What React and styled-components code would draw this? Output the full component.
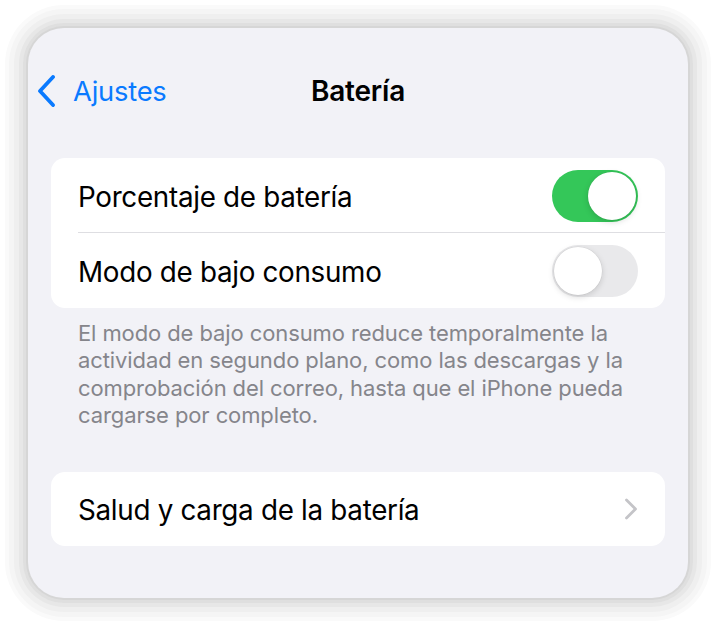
import React from "react";
import styled, { createGlobalStyle } from "styled-components";

const Global = createGlobalStyle`
  html, body { margin: 0; padding: 0; background: #ffffff; }
  body { font-family: Inter, "Noto Sans", sans-serif; -webkit-font-smoothing: antialiased; }
`;

const Page = styled.div`
  width: 716px;
  height: 626px;
  padding: 28px;
  box-sizing: border-box;
  display: flex;
`;

const Screen = styled.div`
  flex: 1;
  background: #f2f2f7;
  border-radius: 36px;
  box-shadow: 0 0 0 2px #d6d6d6, 0 0 0 5px #dfdfdf, 0 0 0 9px #e7e7e7, 0 0 0 14px #efefef, 0 0 0 19px #f5f5f5, 0 0 0 23px #fafafa;
  padding: 28px 23px 0;
  display: flex;
  flex-direction: column;
  overflow: hidden;
`;

const NavBar = styled.div`
  height: 70px;
  position: relative;
  display: flex;
  align-items: center;
  justify-content: center;
`;

const BackButton = styled.div`
  position: absolute;
  left: -15px;
  top: 0;
  bottom: 0;
  display: flex;
  align-items: center;
  gap: 15px;
  color: #0a7aff;
  font-size: 27.3px;
  letter-spacing: -0.2px;
`;

const Title = styled.div`
  font-size: 28px;
  font-weight: 600;
  color: #000;
  letter-spacing: -0.2px;
`;

const Group = styled.div`
  background: #ffffff;
  border-radius: 14px;
  margin-top: ${(p) => p.$mt}px;
  display: flex;
  flex-direction: column;
`;

const Row = styled.div`
  height: ${(p) => p.$h}px;
  display: flex;
  align-items: center;
  justify-content: space-between;
  padding: 0 27px;
  position: relative;
  ${(p) =>
    p.$divider &&
    `&::after {
      content: "";
      position: absolute;
      left: 27px;
      right: 0;
      bottom: 0;
      height: 1px;
      background: #dedee2;
    }`}
`;

const Label = styled.span`
  font-size: 27.8px;
  color: #000;
  letter-spacing: -0.3px;
  padding-top: 2px;
`;

const Toggle = styled.div`
  width: 86px;
  height: 52px;
  border-radius: 26px;
  background: ${(p) => (p.$on ? "#34c759" : "#e9e9eb")};
  position: relative;
  flex-shrink: 0;
`;

const Knob = styled.div`
  position: absolute;
  top: 2px;
  left: ${(p) => (p.$on ? "36px" : "2px")};
  width: 48px;
  height: 48px;
  border-radius: 50%;
  background: #fff;
  box-shadow: 0 2px 6px rgba(0, 0, 0, 0.15), 0 0 0 0.5px rgba(0, 0, 0, 0.06);
`;

const Footer = styled.p`
  margin: 12px 0 0;
  padding: 0 27px;
  font-size: 22px;
  line-height: 27.3px;
  color: #85858b;
  letter-spacing: -0.1px;
`;

const BackChevron = () => (
  <svg width="22" height="32" viewBox="0 0 22 32">
    <path d="M17 2 L4 16 L17 30" fill="none" stroke="#0a7aff" strokeWidth="3.8" strokeLinecap="round" strokeLinejoin="round" />
  </svg>
);

const Chevron = () => (
  <svg width="14" height="22" viewBox="0 0 14 22">
    <path d="M2.5 2 L11.5 11 L2.5 20" fill="none" stroke="#c4c4c8" strokeWidth="2.8" strokeLinecap="round" strokeLinejoin="round" />
  </svg>
);

export default function App() {
  return (
    <>
      <Global />
      <Page>
        <Screen>
          <NavBar>
            <BackButton>
              <BackChevron />
              <span>Ajustes</span>
            </BackButton>
            <Title>Batería</Title>
          </NavBar>
          <Group $mt={32}>
            <Row $h={75} $divider>
              <Label>Porcentaje de batería</Label>
              <Toggle $on>
                <Knob $on />
              </Toggle>
            </Row>
            <Row $h={75}>
              <Label>Modo de bajo consumo</Label>
              <Toggle>
                <Knob />
              </Toggle>
            </Row>
          </Group>
          <Footer>
            El modo de bajo consumo reduce temporalmente la actividad en segundo plano, como las descargas y la comprobación del correo, hasta que el iPhone pueda cargarse por completo.
          </Footer>
          <Group $mt={43}>
            <Row $h={74}>
              <Label>Salud y carga de la batería</Label>
              <Chevron />
            </Row>
          </Group>
        </Screen>
      </Page>
    </>
  );
}
